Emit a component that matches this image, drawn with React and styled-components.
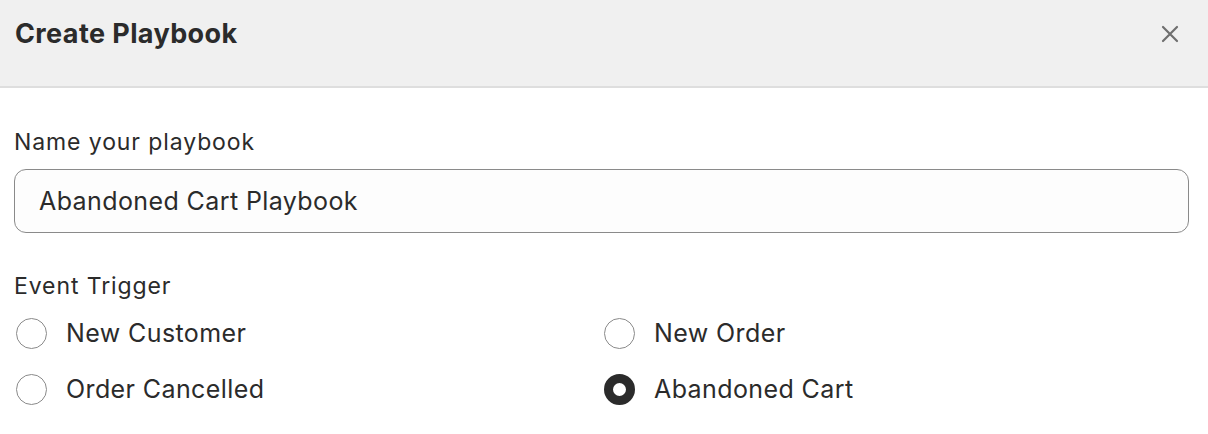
import React, { useState } from 'react';
import styled, { createGlobalStyle } from 'styled-components';

const GlobalStyle = createGlobalStyle`
  body {
    margin: 0;
    background: #ffffff;
    font-family: Inter, "Noto Sans", sans-serif;
    color: #2b2b2b;
  }
`;

const Modal = styled.div`
  width: 1208px;
  height: 434px;
  background: #ffffff;
  overflow: hidden;
`;

const Header = styled.div`
  display: flex;
  justify-content: space-between;
  align-items: flex-start;
  height: 88px;
  box-sizing: border-box;
  padding: 14px 24px 0 15px;
  background: #f0f0f0;
  border-bottom: 2px solid #dedede;
`;

const Title = styled.h1`
  margin: 0;
  font-size: 27px;
  line-height: 40px;
  font-weight: 700;
  letter-spacing: 0.4px;
  color: #2b2b2b;
`;

const CloseButton = styled.button`
  display: flex;
  align-items: center;
  justify-content: center;
  width: 28px;
  height: 28px;
  margin-top: 6px;
  padding: 0;
  border: none;
  background: transparent;
  color: #6f6f6f;
  cursor: pointer;
`;

const Body = styled.div`
  padding: 38px 19px 0 14px;
`;

const Field = styled.div`
  margin-bottom: 37px;
`;

const Label = styled.div`
  font-size: 23px;
  line-height: 32px;
  letter-spacing: 0.9px;
  color: #2b2b2b;
  margin-bottom: ${(p) => p.$gap || 0}px;
`;

const Input = styled.input`
  display: block;
  width: 100%;
  height: 64px;
  box-sizing: border-box;
  padding: 0 24px;
  border: 1px solid #8a8a8a;
  border-radius: 12px;
  background: #fdfdfd;
  font-family: inherit;
  font-size: 25px;
  letter-spacing: 0.4px;
  color: #2b2b2b;
  outline: none;
`;

const Options = styled.div`
  display: grid;
  grid-template-columns: 588px 1fr;
  row-gap: 24px;
  margin-top: 15px;
`;

const Option = styled.label`
  display: flex;
  align-items: center;
  gap: 19px;
  height: 32px;
  padding-left: 2px;
  font-size: 25px;
  letter-spacing: 0.4px;
  color: #2b2b2b;
  cursor: pointer;
`;

const Radio = styled.span`
  width: 31px;
  height: 31px;
  box-sizing: border-box;
  border-radius: 50%;
  background: #ffffff;
  border: ${(p) => (p.$checked ? '9.5px solid #2b2b2b' : '1px solid #8a8a8a')};
  flex-shrink: 0;
`;

const triggers = ['New Customer', 'New Order', 'Order Cancelled', 'Abandoned Cart'];

const App = () => {
  const [name, setName] = useState('Abandoned Cart Playbook');
  const [trigger, setTrigger] = useState('Abandoned Cart');

  return (
    <Modal>
      <GlobalStyle />
      <Header>
        <Title>Create Playbook</Title>
        <CloseButton aria-label="Close">
          <svg width="20" height="20" viewBox="0 0 20 20" fill="none" stroke="currentColor" strokeWidth="2.2" strokeLinecap="round">
            <path d="M3 3 L17 17 M17 3 L3 17" />
          </svg>
        </CloseButton>
      </Header>
      <Body>
        <Field>
          <Label $gap={11}>Name your playbook</Label>
          <Input value={name} onChange={(e) => setName(e.target.value)} />
        </Field>
        <Label>Event Trigger</Label>
        <Options>
          {triggers.map((t) => (
            <Option key={t} onClick={() => setTrigger(t)}>
              <Radio $checked={trigger === t} />
              {t}
            </Option>
          ))}
        </Options>
      </Body>
    </Modal>
  );
};

export default App;
